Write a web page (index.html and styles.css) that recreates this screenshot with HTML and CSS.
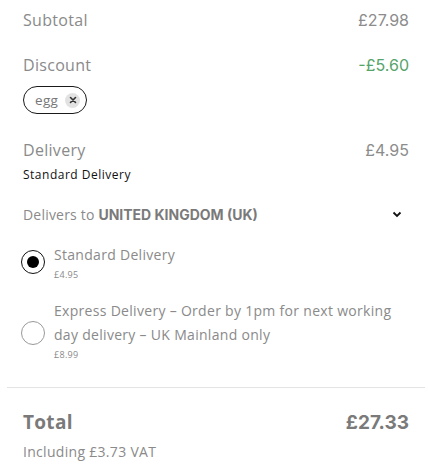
FILE: index.html
```html
<!DOCTYPE html>
<html lang="en">
<head>
<meta charset="utf-8">
<title>Order summary</title>
<link rel="stylesheet" href="styles.css">
</head>
<body>
<div class="summary">
  <div class="section">
    <div class="row row-subtotal">
      <span class="label">Subtotal</span>
      <span class="price">£27.98</span>
    </div>
    <div class="row row-discount">
      <span class="label">Discount</span>
      <span class="price discount">-£5.60</span>
    </div>
    <div class="chip">
      <span class="chip-text">egg</span>
      <span class="chip-x">
        <svg width="8" height="8" viewBox="0 0 8 8"><path d="M1.5 1.5 L6.5 6.5 M6.5 1.5 L1.5 6.5" stroke="#333" stroke-width="1.6" stroke-linecap="round"/></svg>
      </span>
    </div>
    <div class="row row-delivery">
      <span class="label">Delivery</span>
      <span class="price">£4.95</span>
    </div>
    <div class="method">Standard Delivery</div>
    <div class="row row-country">
      <span class="country">Delivers to <b>UNITED KINGDOM (UK)</b></span>
      <svg class="chev" width="10" height="7" viewBox="0 0 10 7"><path d="M1.5 1.5 L5 5 L8.5 1.5" fill="none" stroke="#111" stroke-width="1.8"/></svg>
    </div>
    <div class="option option-1">
      <span class="radio checked"></span>
      <div class="opt-body">
        <div class="opt-title">Standard Delivery</div>
        <div class="opt-price">£4.95</div>
      </div>
    </div>
    <div class="option option-2">
      <span class="radio"></span>
      <div class="opt-body">
        <div class="opt-title">Express Delivery – Order by 1pm for next working day delivery – UK Mainland only</div>
        <div class="opt-price">£8.99</div>
      </div>
    </div>
  </div>
  <div class="divider"></div>
  <div class="section">
    <div class="row row-total">
      <span class="total-label">Total</span>
      <span class="total-price">£27.33</span>
    </div>
    <div class="vat">Including £3.73 VAT</div>
  </div>
</div>
</body>
</html>
```
FILE: styles.css
```css
html, body {
  margin: 0;
  padding: 0;
  background: #ffffff;
}
body {
  font-family: "Open Sans", "Noto Sans", sans-serif;
  color: #888888;
}
.summary {
  padding: 0 3px 0 7px;
}
.section {
  padding: 0 16px 0 16px;
}
.row {
  display: flex;
  justify-content: space-between;
  align-items: center;
  height: 24px;
}
.row-subtotal { margin-top: 8px; }
.row-discount { margin-top: 21px; }
.row-delivery { margin-top: 24px; }
.row-country { margin-top: 19px; padding-right: 7px; }
.label {
  font-size: 16px;
  color: #8a8a8a;
  letter-spacing: 0.3px;
}
.price {
  font-family: Inter, "Liberation Sans", sans-serif;
  font-size: 16px;
  color: #8c8c8c;
}
.price.discount {
  color: #55a46a;
}
.chip {
  margin-top: 9px;
  display: inline-flex;
  align-items: center;
  height: 26px;
  padding: 0 6px 0 11px;
  border: 1.3px solid #1a1a1a;
  border-radius: 14px;
  gap: 7px;
}
.chip-text {
  font-size: 13.5px;
  color: #777;
  letter-spacing: 0.3px;
}
.chip-x {
  width: 15px;
  height: 15px;
  border-radius: 50%;
  background: #e2e2e2;
  display: flex;
  align-items: center;
  justify-content: center;
}
.method {
  margin-top: 5px;
  font-size: 12px;
  line-height: 16px;
  color: #111;
  letter-spacing: 0.5px;
}
.country {
  font-size: 14px;
  color: #8a8a8a;
  letter-spacing: 0.2px;
}
.country b {
  font-family: Inter, "Liberation Sans", sans-serif;
  font-weight: 700;
  color: #7a7a7a;
  letter-spacing: 0;
}
.option {
  display: flex;
  align-items: center;
  gap: 9px;
}
.option-1 { margin-top: 17px; }
.option-2 { margin-top: 18px; }
.radio {
  flex: none;
  box-sizing: border-box;
  width: 24px;
  height: 24px;
  border-radius: 50%;
  border: 1.3px solid #999;
  margin-left: -2px;
  position: relative;
}
.radio.checked {
  border: 1.5px solid #111;
}
.radio.checked::after {
  content: "";
  position: absolute;
  left: 50%;
  top: 50%;
  width: 12px;
  height: 12px;
  margin: -6px 0 0 -6px;
  border-radius: 50%;
  background: #000;
}
.option-2 .radio { margin-top: 6px; }
.opt-body {
  display: flex;
  flex-direction: column;
}
.opt-title {
  font-size: 14px;
  line-height: 24px;
  color: #8a8a8a;
  letter-spacing: 0.3px;
}
.opt-price {
  margin-top: 2px;
  font-size: 9px;
  line-height: 12px;
  color: #8a8a8a;
  letter-spacing: 0.3px;
}
.divider {
  margin-top: 26px;
  height: 1px;
  background: #e3e3e3;
}
.row-total { margin-top: 22px; }
.total-label {
  font-size: 19px;
  font-weight: 700;
  color: #7a7a7a;
  letter-spacing: 0.3px;
}
.total-price {
  font-family: Inter, "Liberation Sans", sans-serif;
  font-size: 19px;
  font-weight: 700;
  color: #7a7a7a;
}
.vat {
  margin-top: 6px;
  font-size: 14px;
  line-height: 24px;
  color: #8a8a8a;
  letter-spacing: 0.3px;
}
```
